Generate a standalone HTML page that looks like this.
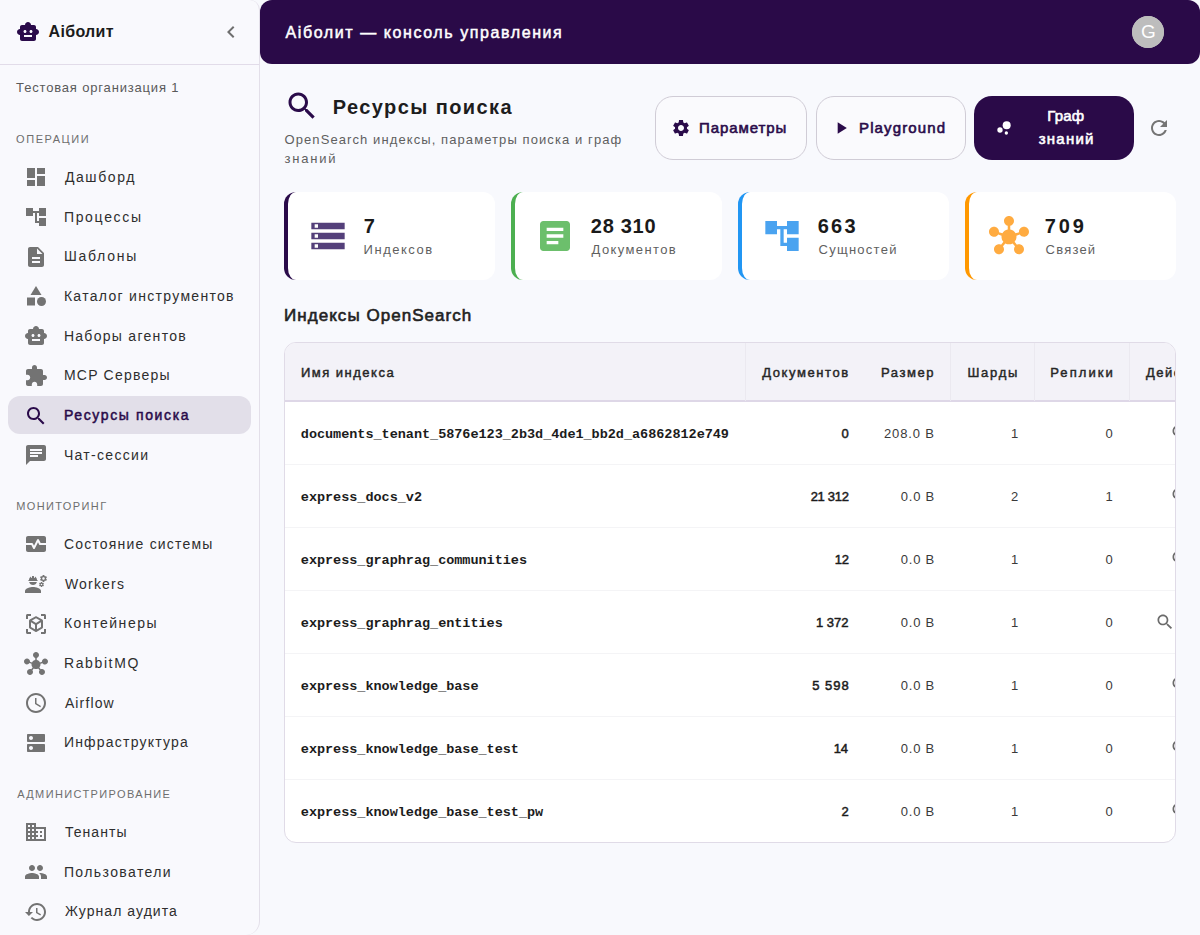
<!DOCTYPE html>
<html><head><meta charset="utf-8">
<style>
*{box-sizing:border-box;margin:0;padding:0}
html,body{width:1200px;height:935px;overflow:hidden;background:#f8f9fd;font-family:'Liberation Sans',sans-serif}
.abs{position:absolute;display:block}
.t{white-space:nowrap;line-height:1}
</style></head><body>

<div class="abs" style="left:0;top:0;width:260px;height:935px;background:#f9f9fd;border-right:1px solid #e3dfe9;border-top-right-radius:10px;border-bottom-right-radius:14px"></div>
<div class="abs" style="left:0;top:64px;width:259px;height:1px;background:#e2dce9"></div>
<svg class="abs" style="left:16px;top:20px;width:24px;height:24px;fill:#2a0b4a;" viewBox="0 0 24 24"><path d="M20 9V7c0-1.1-.9-2-2-2h-3c0-1.66-1.34-3-3-3S9 3.34 9 5H6c-1.1 0-2 .9-2 2v2c-1.66 0-3 1.34-3 3s1.34 3 3 3v4c0 1.1.9 2 2 2h12c1.1 0 2-.9 2-2v-4c1.66 0 3-1.34 3-3s-1.34-3-3-3zM7.5 11.5c0-.83.67-1.5 1.5-1.5s1.5.67 1.5 1.5S9.83 13 9 13s-1.5-.67-1.5-1.5zM16 17H8v-2h8v2zm-1-4c-.83 0-1.5-.67-1.5-1.5S14.17 10 15 10s1.5.67 1.5 1.5S15.83 13 15 13z"/></svg>
<div class="abs t" style="left:48.50px;top:24.00px;font-size:16px;color:#1b1b1b;font-weight:bold;letter-spacing:0.333px;font-family:'Liberation Sans',sans-serif;">Aiболит</div>
<svg class="abs" style="left:219.2px;top:20px;width:24px;height:24px;fill:#6f6f6f;" viewBox="0 0 24 24"><path d="M15.41 7.41L14 6l-6 6 6 6 1.41-1.41L10.83 12z"/></svg>
<div class="abs t" style="left:16.10px;top:81.20px;font-size:13px;color:#5a5a5a;font-weight:normal;letter-spacing:0.829px;font-family:'Liberation Sans',sans-serif;">Тестовая организация 1</div>
<div class="abs t" style="left:16.10px;top:134.00px;font-size:11px;color:#6e6e6e;font-weight:normal;letter-spacing:1.543px;font-family:'Liberation Sans',sans-serif;">ОПЕРАЦИИ</div>
<svg class="abs" style="left:24px;top:165.3px;width:24px;height:24px;fill:#737373;" viewBox="0 0 24 24"><path d="M3 13h8V3H3v10zm0 8h8v-6H3v6zm10 0h8V11h-8v10zm0-18v6h8V3h-8z"/></svg>
<div class="abs t" style="left:64.90px;top:169.80px;font-size:14px;color:#2e2e2e;font-weight:normal;letter-spacing:1.600px;font-family:'Liberation Sans',sans-serif;">Дашборд</div>
<svg class="abs" style="left:24px;top:205.0px;width:24px;height:24px;fill:#737373;" viewBox="0 0 24 24"><path d="M22 11V3h-7v3H9V3H2v8h7V8h2v10h4v3h7v-8h-7v3h-2V8h2v3z"/></svg>
<div class="abs t" style="left:63.90px;top:209.50px;font-size:14px;color:#2e2e2e;font-weight:normal;letter-spacing:1.686px;font-family:'Liberation Sans',sans-serif;">Процессы</div>
<svg class="abs" style="left:24px;top:244.70000000000005px;width:24px;height:24px;fill:#737373;" viewBox="0 0 24 24"><path d="M14 2H6c-1.1 0-1.99.9-1.99 2L4 20c0 1.1.89 2 1.99 2H18c1.1 0 2-.9 2-2V8l-6-6zm2 16H8v-2h8v2zm0-4H8v-2h8v2zm-3-5V3.5L18.5 9H13z"/></svg>
<div class="abs t" style="left:63.90px;top:249.20px;font-size:14px;color:#2e2e2e;font-weight:normal;letter-spacing:1.733px;font-family:'Liberation Sans',sans-serif;">Шаблоны</div>
<svg class="abs" style="left:24px;top:284.40000000000003px;width:24px;height:24px;fill:#737373;" viewBox="0 0 24 24"><path d="M12 2l-5.5 9h11z"/><circle cx="17.5" cy="17.5" r="4.5"/><path d="M3 13.5h8v8H3z"/></svg>
<div class="abs t" style="left:63.90px;top:288.90px;font-size:14px;color:#2e2e2e;font-weight:normal;letter-spacing:1.305px;font-family:'Liberation Sans',sans-serif;">Каталог инструментов</div>
<svg class="abs" style="left:24px;top:324.1px;width:24px;height:24px;fill:#737373;" viewBox="0 0 24 24"><path d="M20 9V7c0-1.1-.9-2-2-2h-3c0-1.66-1.34-3-3-3S9 3.34 9 5H6c-1.1 0-2 .9-2 2v2c-1.66 0-3 1.34-3 3s1.34 3 3 3v4c0 1.1.9 2 2 2h12c1.1 0 2-.9 2-2v-4c1.66 0 3-1.34 3-3s-1.34-3-3-3zM7.5 11.5c0-.83.67-1.5 1.5-1.5s1.5.67 1.5 1.5S9.83 13 9 13s-1.5-.67-1.5-1.5zM16 17H8v-2h8v2zm-1-4c-.83 0-1.5-.67-1.5-1.5S14.17 10 15 10s1.5.67 1.5 1.5S15.83 13 15 13z"/></svg>
<div class="abs t" style="left:63.90px;top:328.60px;font-size:14px;color:#2e2e2e;font-weight:normal;letter-spacing:1.292px;font-family:'Liberation Sans',sans-serif;">Наборы агентов</div>
<svg class="abs" style="left:24px;top:363.8px;width:24px;height:24px;fill:#737373;" viewBox="0 0 24 24"><path d="M20.5 11H19V7c0-1.1-.9-2-2-2h-4V3.5C13 2.12 11.88 1 10.5 1S8 2.12 8 3.5V5H4c-1.1 0-1.99.9-1.99 2v3.8H3.5c1.49 0 2.7 1.21 2.7 2.7s-1.21 2.7-2.7 2.7H2V20c0 1.1.9 2 2 2h3.8v-1.5c0-1.49 1.21-2.7 2.7-2.7 1.49 0 2.7 1.21 2.7 2.7V22H17c1.1 0 2-.9 2-2v-4h1.5c1.38 0 2.5-1.12 2.5-2.5S21.88 11 20.5 11z"/></svg>
<div class="abs t" style="left:63.90px;top:368.30px;font-size:14px;color:#2e2e2e;font-weight:normal;letter-spacing:1.240px;font-family:'Liberation Sans',sans-serif;">MCP Серверы</div>
<div class="abs" style="left:8px;top:395.5px;width:243px;height:38.5px;border-radius:12px;background:#e2dfe9"></div>
<svg class="abs" style="left:24px;top:403.5px;width:24px;height:24px;fill:#2a0b4a;" viewBox="0 0 24 24"><path d="M15.5 14h-.79l-.28-.27C15.41 12.59 16 11.11 16 9.5 16 5.91 13.09 3 9.5 3S3 5.91 3 9.5 5.91 16 9.5 16c1.61 0 3.09-.59 4.23-1.57l.27.28v.79l5 4.99L20.49 19l-4.99-5zm-6 0C7.01 14 5 11.99 5 9.5S7.01 5 9.5 5 14 7.01 14 9.5 11.99 14 9.5 14z"/></svg>
<div class="abs t" style="left:64.00px;top:407.55px;font-size:14px;color:#2a0b4a;font-weight:normal;letter-spacing:1.615px;font-family:'Liberation Sans',sans-serif;-webkit-text-stroke:0.5px #2a0b4a;">Ресурсы поиска</div>
<svg class="abs" style="left:24px;top:443.20000000000005px;width:24px;height:24px;fill:#737373;" viewBox="0 0 24 24"><path d="M20 2H4c-1.1 0-1.99.9-1.99 2L2 22l4-4h14c1.1 0 2-.9 2-2V4c0-1.1-.9-2-2-2zM6 9h12v2H6V9zm8 5H6v-2h8v2zm4-6H6V6h12v2z"/></svg>
<div class="abs t" style="left:63.90px;top:447.70px;font-size:14px;color:#2e2e2e;font-weight:normal;letter-spacing:1.311px;font-family:'Liberation Sans',sans-serif;">Чат-сессии</div>
<div class="abs t" style="left:16.20px;top:501.00px;font-size:11px;color:#6e6e6e;font-weight:normal;letter-spacing:1.378px;font-family:'Liberation Sans',sans-serif;">МОНИТОРИНГ</div>
<svg class="abs" style="left:24px;top:532.4px;width:24px;height:24px;fill:#737373;" viewBox="0 0 24 24"><path d="M15.11 12.45L14 10.24l-3.11 6.21c-.16.34-.51.55-.89.55s-.73-.21-.89-.55L7.38 13H2v5c0 1.1.9 2 2 2h16c1.1 0 2-.9 2-2v-5h-6c-.38 0-.72-.21-.89-.55z"/><path d="M20 4H4c-1.1 0-2 .9-2 2v5h6c.38 0 .73.21.89.55L10 13.76l3.11-6.21c.34-.68 1.45-.68 1.79 0L16.62 11H22V6c0-1.1-.9-2-2-2z"/></svg>
<div class="abs t" style="left:63.90px;top:536.90px;font-size:14px;color:#2e2e2e;font-weight:normal;letter-spacing:1.200px;font-family:'Liberation Sans',sans-serif;">Состояние системы</div>
<svg class="abs" style="left:24px;top:572.1px;width:24px;height:24px;fill:#737373;" viewBox="0 0 24 24"><path d="M9 15c-2.67 0-8 1.34-8 4v2h16v-2c0-2.66-5.33-4-8-4z"/><path d="M22.1 6.84c.01-.11.02-.22.02-.34 0-.12-.01-.23-.03-.34l.74-.58c.07-.05.08-.15.04-.22l-.7-1.21c-.04-.08-.14-.1-.21-.08l-.86.35c-.18-.14-.38-.25-.59-.34l-.13-.93c-.02-.09-.09-.15-.18-.15h-1.4c-.09 0-.16.06-.17.15l-.13.93c-.21.09-.41.21-.59.34l-.87-.35c-.08-.03-.17 0-.21.08l-.7 1.21c-.04.08-.03.17.04.22l.74.58c-.02.11-.03.23-.03.34 0 .11.01.23.03.34l-.74.58c-.07.05-.08.15-.04.22l.7 1.21c.04.08.14.1.21.08l.87-.35c.18.14.38.25.59.34l.13.93c.01.09.08.15.17.15h1.4c.09 0 .16-.06.17-.15l.13-.93c.21-.09.41-.21.59-.34l.87.35c.08.03.17 0 .21-.08l.7-1.21c.04-.08.03-.17-.04-.22l-.73-.58zm-2.6.91c-.69 0-1.25-.56-1.25-1.25s.56-1.25 1.25-1.25 1.25.56 1.25 1.25-.56 1.25-1.25 1.25zm.42 3.93l-.5-.87c-.03-.06-.1-.08-.15-.06l-.62.25c-.13-.1-.27-.18-.42-.24l-.09-.66c-.02-.06-.08-.1-.14-.1h-1c-.06 0-.11.04-.12.11l-.09.66c-.15.06-.29.15-.42.24l-.62-.25c-.06-.02-.12 0-.15.06l-.5.87c-.03.06-.02.12.03.16l.53.41c-.01.08-.02.16-.02.24 0 .08.01.17.02.24l-.53.41c-.05.04-.06.11-.03.16l.5.87c.03.06.1.08.15.06l.62-.25c.13.1.27.18.42.24l.09.66c.01.07.06.11.12.11h1c.06 0 .12-.04.12-.11l.09-.66c.15-.06.29-.15.42-.24l.62.25c.06.02.12 0 .15-.06l.5-.87c.03-.06.02-.12-.03-.16l-.52-.41c.01-.08.02-.16.02-.24 0-.08-.01-.17-.02-.24l.53-.41c.05-.04.06-.11.04-.17zm-2.42 1.65c-.46 0-.83-.38-.83-.83 0-.46.38-.83.83-.83s.83.38.83.83c0 .46-.37.83-.83.83z"/><path d="M4.74 9h8.53c.27 0 .49-.22.49-.49v-.02c0-.27-.22-.49-.49-.49H13c0-1.48-.81-2.75-2-3.45v.95c0 .28-.22.5-.5.5s-.5-.22-.5-.5V4.14C9.68 4.06 9.35 4 9 4s-.68.06-1 .14V5.5c0 .28-.22.5-.5.5S7 5.78 7 5.5v-.95C5.81 5.25 5 6.52 5 8h-.26c-.27 0-.49.22-.49.49v.03c0 .26.22.48.49.48z"/><path d="M9 13c1.86 0 3.41-1.28 3.86-3H5.14c.45 1.72 2 3 3.86 3z"/></svg>
<div class="abs t" style="left:64.90px;top:576.60px;font-size:14px;color:#2e2e2e;font-weight:normal;letter-spacing:1.200px;font-family:'Liberation Sans',sans-serif;">Workers</div>
<svg class="abs" style="left:24px;top:611.8px;width:24px;height:24px;fill:#737373;" viewBox="0 0 24 24"><path d="M18.25 7.6l-5.5-3.18c-.46-.27-1.04-.27-1.5 0L5.75 7.6c-.46.27-.75.76-.75 1.3v6.35c0 .54.29 1.03.75 1.3l5.5 3.18c.46.27 1.04.27 1.5 0l5.5-3.18c.46-.27.75-.76.75-1.3V8.9c0-.54-.29-1.03-.75-1.3zM7 14.96v-4.62l4 2.32v4.61l-4-2.31zm5-4.03L8 8.61l4-2.31 4 2.31-4 2.32zm1 6.34v-4.61l4-2.32v4.62l-4 2.31zM7 2H3.5C2.67 2 2 2.67 2 3.5V7h2V4h3V2zm10 0h3.5c.83 0 1.5.67 1.5 1.5V7h-2V4h-3V2zM7 22H3.5c-.83 0-1.5-.67-1.5-1.5V17h2v3h3v2zm10 0h3.5c.83 0 1.5-.67 1.5-1.5V17h-2v3h-3v2z"/></svg>
<div class="abs t" style="left:63.90px;top:616.30px;font-size:14px;color:#2e2e2e;font-weight:normal;letter-spacing:1.533px;font-family:'Liberation Sans',sans-serif;">Контейнеры</div>
<svg class="abs" style="left:24px;top:651.5px;width:24px;height:24px;fill:#737373;" viewBox="0 0 24 24"><path d="M8.4 18.2c.38.5.6 1.12.6 1.8 0 1.66-1.34 3-3 3s-3-1.34-3-3 1.34-3 3-3c.44 0 .85.09 1.23.26l1.41-1.77c-.92-1.03-1.29-2.39-1.09-3.69l-2.03-.68c-.54.83-1.46 1.38-2.52 1.38-1.66 0-3-1.34-3-3s1.34-3 3-3 3 1.34 3 3c0 .07 0 .14-.01.21l2.03.68c.64-1.21 1.82-2.09 3.22-2.32V5.91C9.96 5.57 9 4.4 9 3c0-1.66 1.34-3 3-3s3 1.34 3 3c0 1.4-.96 2.57-2.25 2.91v2.16c1.4.23 2.58 1.11 3.22 2.32l2.03-.68c-.01-.07-.01-.14-.01-.21 0-1.66 1.34-3 3-3s3 1.34 3 3-1.34 3-3 3c-1.06 0-1.98-.55-2.52-1.37l-2.03.68c.2 1.29-.16 2.65-1.09 3.69l1.41 1.77c.38-.17.79-.26 1.23-.26 1.66 0 3 1.34 3 3s-1.34 3-3 3-3-1.34-3-3c0-.68.22-1.3.6-1.8l-1.41-1.77c-1.35.75-3.01.76-4.37 0L8.4 18.2z"/></svg>
<div class="abs t" style="left:63.90px;top:656.00px;font-size:14px;color:#2e2e2e;font-weight:normal;letter-spacing:1.629px;font-family:'Liberation Sans',sans-serif;">RabbitMQ</div>
<svg class="abs" style="left:24px;top:691.2px;width:24px;height:24px;fill:#737373;" viewBox="0 0 24 24"><path d="M11.99 2C6.47 2 2 6.48 2 12s4.47 10 9.99 10C17.52 22 22 17.52 22 12S17.52 2 11.99 2zM12 20c-4.42 0-8-3.58-8-8s3.58-8 8-8 8 3.58 8 8-3.58 8-8 8zm.5-13H11v6l5.25 3.15.75-1.23-4.5-2.67z"/></svg>
<div class="abs t" style="left:64.90px;top:695.70px;font-size:14px;color:#2e2e2e;font-weight:normal;letter-spacing:1.133px;font-family:'Liberation Sans',sans-serif;">Airflow</div>
<svg class="abs" style="left:24px;top:730.9px;width:24px;height:24px;fill:#737373;" viewBox="0 0 24 24"><path d="M20 13H4c-.55 0-1 .45-1 1v6c0 .55.45 1 1 1h16c.55 0 1-.45 1-1v-6c0-.55-.45-1-1-1zM7 19c-1.1 0-2-.9-2-2s.9-2 2-2 2 .9 2 2-.9 2-2 2zM20 3H4c-.55 0-1 .45-1 1v6c0 .55.45 1 1 1h16c.55 0 1-.45 1-1V4c0-.55-.45-1-1-1zM7 9c-1.1 0-2-.9-2-2s.9-2 2-2 2 .9 2 2-.9 2-2 2z"/></svg>
<div class="abs t" style="left:63.90px;top:735.40px;font-size:14px;color:#2e2e2e;font-weight:normal;letter-spacing:1.215px;font-family:'Liberation Sans',sans-serif;">Инфраструктура</div>
<div class="abs t" style="left:17.20px;top:789.40px;font-size:11px;color:#6e6e6e;font-weight:normal;letter-spacing:1.375px;font-family:'Liberation Sans',sans-serif;">АДМИНИСТРИРОВАНИЕ</div>
<svg class="abs" style="left:24px;top:820.4px;width:24px;height:24px;fill:#737373;" viewBox="0 0 24 24"><path d="M12 7V3H2v18h20V7H12zM6 19H4v-2h2v2zm0-4H4v-2h2v2zm0-4H4V9h2v2zm0-4H4V5h2v2zm4 12H8v-2h2v2zm0-4H8v-2h2v2zm0-4H8V9h2v2zm0-4H8V5h2v2zm10 12h-8v-2h2v-2h-2v-2h2v-2h-2V9h8v10zm-2-8h-2v2h2v-2zm0 4h-2v2h2v-2z"/></svg>
<div class="abs t" style="left:64.90px;top:824.90px;font-size:14px;color:#2e2e2e;font-weight:normal;letter-spacing:1.067px;font-family:'Liberation Sans',sans-serif;">Тенанты</div>
<svg class="abs" style="left:24px;top:860.1px;width:24px;height:24px;fill:#737373;" viewBox="0 0 24 24"><path d="M16 11c1.66 0 2.99-1.34 2.99-3S17.66 5 16 5c-1.66 0-3 1.34-3 3s1.34 3 3 3zm-8 0c1.66 0 2.99-1.34 2.99-3S9.66 5 8 5C6.34 5 5 6.34 5 8s1.34 3 3 3zm0 2c-2.33 0-7 1.17-7 3.5V19h14v-2.5c0-2.33-4.67-3.5-7-3.5zm8 0c-.29 0-.62.02-.97.05 1.16.84 1.97 1.97 1.97 3.45V19h6v-2.5c0-2.33-4.67-3.5-7-3.5z"/></svg>
<div class="abs t" style="left:63.90px;top:864.60px;font-size:14px;color:#2e2e2e;font-weight:normal;letter-spacing:1.400px;font-family:'Liberation Sans',sans-serif;">Пользователи</div>
<svg class="abs" style="left:24px;top:899.8px;width:24px;height:24px;fill:#737373;" viewBox="0 0 24 24"><path d="M13 3c-4.97 0-9 4.03-9 9H1l3.89 3.89.07.14L9 12H6c0-3.87 3.13-7 7-7s7 3.13 7 7-3.13 7-7 7c-1.93 0-3.68-.79-4.94-2.06l-1.42 1.42C8.27 19.99 10.51 21 13 21c4.97 0 9-4.03 9-9s-4.03-9-9-9zm-1 5v5l4.28 2.54.72-1.21-3.5-2.08V8H12z"/></svg>
<div class="abs t" style="left:64.90px;top:904.30px;font-size:14px;color:#2e2e2e;font-weight:normal;letter-spacing:1.067px;font-family:'Liberation Sans',sans-serif;">Журнал аудита</div>
<div class="abs" style="left:260px;top:0;width:940px;height:64px;background:#2a0a48;border-radius:12px"></div>
<div class="abs t" style="left:285.50px;top:24.55px;font-size:16px;color:#ffffff;font-weight:normal;letter-spacing:1.585px;font-family:'Liberation Sans',sans-serif;-webkit-text-stroke:0.5px #ffffff;">Aiболит — консоль управления</div>
<div class="abs" style="left:1132px;top:16px;width:32px;height:32px;border-radius:50%;background:#bdbdbd"></div>
<div class="abs" style="left:1132px;top:16px;width:32px;height:32px;border-radius:50%;background:#bdbdbd;color:#fff;font-size:19px;line-height:32px;text-align:center;padding-left:1px">G</div>
<svg class="abs" style="left:283.8px;top:87.8px;width:36px;height:36px;fill:#2a0b4a;" viewBox="0 0 24 24"><path d="M15.5 14h-.79l-.28-.27C15.41 12.59 16 11.11 16 9.5 16 5.91 13.09 3 9.5 3S3 5.91 3 9.5 5.91 16 9.5 16c1.61 0 3.09-.59 4.23-1.57l.27.28v.79l5 4.99L20.49 19l-4.99-5zm-6 0C7.01 14 5 11.99 5 9.5S7.01 5 9.5 5 14 7.01 14 9.5 11.99 14 9.5 14z"/></svg>
<div class="abs t" style="left:332.80px;top:96.50px;font-size:20px;color:#1d1d1d;font-weight:bold;letter-spacing:1.400px;font-family:'Liberation Sans',sans-serif;">Ресурсы поиска</div>
<div class="abs t" style="left:284.50px;top:132.50px;font-size:13px;color:#5f5f5f;font-weight:normal;letter-spacing:1.090px;font-family:'Liberation Sans',sans-serif;">OpenSearch индексы, параметры поиска и граф</div>
<div class="abs t" style="left:284.50px;top:151.50px;font-size:13px;color:#5f5f5f;font-weight:normal;letter-spacing:1.800px;font-family:'Liberation Sans',sans-serif;">знаний</div>
<div class="abs" style="left:655px;top:96px;width:152px;height:64px;border-radius:18px;border:1px solid #d0ccd6;background:#fafafd"></div>
<div class="abs" style="left:816px;top:96px;width:149.5px;height:64px;border-radius:18px;border:1px solid #d0ccd6;background:#fafafd"></div>
<div class="abs" style="left:974px;top:96px;width:160px;height:64px;border-radius:18px;background:#2a0a48"></div>
<svg class="abs" style="left:670.5px;top:118.4px;width:20px;height:20px;fill:#2a0b4a;" viewBox="0 0 24 24"><path d="M19.14 12.94c.04-.3.06-.61.06-.94 0-.32-.02-.64-.07-.94l2.03-1.58c.18-.14.23-.41.12-.61l-1.92-3.32c-.12-.22-.37-.29-.59-.22l-2.39.96c-.5-.38-1.03-.7-1.62-.94l-.36-2.54c-.04-.24-.24-.41-.48-.41h-3.84c-.24 0-.43.17-.47.41l-.36 2.54c-.59.24-1.13.57-1.62.94l-2.39-.96c-.22-.08-.47 0-.59.22L2.74 8.87c-.12.21-.08.47.12.61l2.03 1.58c-.05.3-.09.63-.09.94s.02.64.07.94l-2.03 1.58c-.18.14-.23.41-.12.61l1.92 3.32c.12.22.37.29.59.22l2.39-.96c.5.38 1.03.7 1.62.94l.36 2.54c.05.24.24.41.48.41h3.84c.24 0 .44-.17.47-.41l.36-2.54c.59-.24 1.13-.56 1.62-.94l2.39.96c.22.08.47 0 .59-.22l1.92-3.32c.12-.22.07-.47-.12-.61l-2.01-1.58zM12 15.6c-1.98 0-3.6-1.62-3.6-3.6s1.62-3.6 3.6-3.6 3.6 1.62 3.6 3.6-1.62 3.6-3.6 3.6z"/></svg>
<div class="abs t" style="left:699.10px;top:119.75px;font-size:15px;color:#2a0b4a;font-weight:normal;letter-spacing:0.900px;font-family:'Liberation Sans',sans-serif;-webkit-text-stroke:0.6px #2a0b4a;">Параметры</div>
<svg class="abs" style="left:831.3px;top:118.3px;width:20px;height:20px;fill:#2a0b4a;" viewBox="0 0 24 24"><path d="M8 5v14l11-7z"/></svg>
<div class="abs t" style="left:859.00px;top:119.75px;font-size:15px;color:#2a0b4a;font-weight:normal;letter-spacing:1.133px;font-family:'Liberation Sans',sans-serif;-webkit-text-stroke:0.6px #2a0b4a;">Playground</div>
<svg class="abs" style="left:993.8px;top:117.9px;width:20px;height:20px;fill:#ffffff;" viewBox="0 0 24 24"><circle cx="7.2" cy="14.4" r="3.2"/><circle cx="14.8" cy="18" r="2"/><circle cx="15.2" cy="8.8" r="4.8"/></svg>
<div class="abs t" style="left:1047.30px;top:107.75px;font-size:15px;color:#ffffff;font-weight:normal;letter-spacing:0.133px;font-family:'Liberation Sans',sans-serif;-webkit-text-stroke:0.6px #ffffff;">Граф</div>
<div class="abs t" style="left:1038.80px;top:131.25px;font-size:15px;color:#ffffff;font-weight:normal;letter-spacing:1.200px;font-family:'Liberation Sans',sans-serif;-webkit-text-stroke:0.6px #ffffff;">знаний</div>
<svg class="abs" style="left:1147.2px;top:116.3px;width:24px;height:24px;fill:#757575;" viewBox="0 0 24 24"><path d="M17.65 6.35C16.2 4.9 14.21 4 12 4c-4.42 0-7.99 3.58-7.99 8s3.57 8 7.99 8c3.73 0 6.84-2.55 7.73-6h-2.08c-.82 2.33-3.04 4-5.65 4-3.31 0-6-2.69-6-6s2.69-6 6-6c1.66 0 3.14.69 4.22 1.78L13 11h7V4l-2.35 2.35z"/></svg>
<div class="abs" style="left:284px;top:192px;width:211px;height:87.5px;background:#fff;border-radius:12px;border-left:4px solid #2a0b4a"></div>
<svg class="abs" style="left:308px;top:216px;width:40px;height:40px;fill:#54407a;" viewBox="0 0 24 24"><path d="M2 20h20v-4H2v4zm2-3h2v2H4v-2zM2 4v4h20V4H2zm4 3H4V5h2v2zm-4 7h20v-4H2v4zm2-3h2v2H4v-2z"/></svg>
<div class="abs t" style="left:363.80px;top:216.10px;font-size:20px;color:#1a1a1a;font-weight:bold;letter-spacing:0.000px;font-family:'Liberation Sans',sans-serif;">7</div>
<div class="abs t" style="left:363.60px;top:243.40px;font-size:13px;color:#5f5f5f;font-weight:normal;letter-spacing:1.514px;font-family:'Liberation Sans',sans-serif;">Индексов</div>
<div class="abs" style="left:511px;top:192px;width:211px;height:87.5px;background:#fff;border-radius:12px;border-left:4px solid #4caf50"></div>
<svg class="abs" style="left:535px;top:216px;width:40px;height:40px;fill:#6cbf6c;" viewBox="0 0 24 24"><path d="M19 3H5c-1.1 0-2 .9-2 2v14c0 1.1.9 2 2 2h14c1.1 0 2-.9 2-2V5c0-1.1-.9-2-2-2zm-5 14H7v-2h7v2zm3-4H7v-2h10v2zm0-4H7V7h10v2z"/></svg>
<div class="abs t" style="left:590.80px;top:216.10px;font-size:20px;color:#1a1a1a;font-weight:bold;letter-spacing:0.720px;font-family:'Liberation Sans',sans-serif;">28 310</div>
<div class="abs t" style="left:591.60px;top:243.40px;font-size:13px;color:#5f5f5f;font-weight:normal;letter-spacing:1.378px;font-family:'Liberation Sans',sans-serif;">Документов</div>
<div class="abs" style="left:738px;top:192px;width:211px;height:87.5px;background:#fff;border-radius:12px;border-left:4px solid #2196f3"></div>
<svg class="abs" style="left:762px;top:216px;width:40px;height:40px;fill:#4aa3f0;" viewBox="0 0 24 24"><path d="M22 11V3h-7v3H9V3H2v8h7V8h2v10h4v3h7v-8h-7v3h-2V8h2v3z"/></svg>
<div class="abs t" style="left:817.80px;top:216.10px;font-size:20px;color:#1a1a1a;font-weight:bold;letter-spacing:2.200px;font-family:'Liberation Sans',sans-serif;">663</div>
<div class="abs t" style="left:818.60px;top:243.40px;font-size:13px;color:#5f5f5f;font-weight:normal;letter-spacing:1.250px;font-family:'Liberation Sans',sans-serif;">Сущностей</div>
<div class="abs" style="left:965px;top:192px;width:211px;height:87.5px;background:#fff;border-radius:12px;border-left:4px solid #ff9800"></div>
<svg class="abs" style="left:989px;top:216px;width:40px;height:40px;fill:#ffab40;" viewBox="0 0 24 24"><path d="M8.4 18.2c.38.5.6 1.12.6 1.8 0 1.66-1.34 3-3 3s-3-1.34-3-3 1.34-3 3-3c.44 0 .85.09 1.23.26l1.41-1.77c-.92-1.03-1.29-2.39-1.09-3.69l-2.03-.68c-.54.83-1.46 1.38-2.52 1.38-1.66 0-3-1.34-3-3s1.34-3 3-3 3 1.34 3 3c0 .07 0 .14-.01.21l2.03.68c.64-1.21 1.82-2.09 3.22-2.32V5.91C9.96 5.57 9 4.4 9 3c0-1.66 1.34-3 3-3s3 1.34 3 3c0 1.4-.96 2.57-2.25 2.91v2.16c1.4.23 2.58 1.11 3.22 2.32l2.03-.68c-.01-.07-.01-.14-.01-.21 0-1.66 1.34-3 3-3s3 1.34 3 3-1.34 3-3 3c-1.06 0-1.98-.55-2.52-1.37l-2.03.68c.2 1.29-.16 2.65-1.09 3.69l1.41 1.77c.38-.17.79-.26 1.23-.26 1.66 0 3 1.34 3 3s-1.34 3-3 3-3-1.34-3-3c0-.68.22-1.3.6-1.8l-1.41-1.77c-1.35.75-3.01.76-4.37 0L8.4 18.2z"/></svg>
<div class="abs t" style="left:1044.80px;top:216.10px;font-size:20px;color:#1a1a1a;font-weight:bold;letter-spacing:2.900px;font-family:'Liberation Sans',sans-serif;">709</div>
<div class="abs t" style="left:1045.60px;top:243.40px;font-size:13px;color:#5f5f5f;font-weight:normal;letter-spacing:1.200px;font-family:'Liberation Sans',sans-serif;">Связей</div>
<div class="abs t" style="left:284.00px;top:306.75px;font-size:17px;color:#222222;font-weight:normal;letter-spacing:1.047px;font-family:'Liberation Sans',sans-serif;-webkit-text-stroke:0.6px #222222;">Индексы OpenSearch</div>
<div class="abs" style="left:284px;top:342px;width:892px;height:501px;background:#fff;border:1px solid #e0dbe7;border-radius:12px;overflow:hidden">
<div class="abs" style="left:0;top:0;width:892px;height:58.7px;background:#f3f2f8;border-bottom:2px solid #ded7e7"></div>
<div class="abs" style="left:460px;top:0;width:1px;height:57.5px;background:#ebe9f0"></div>
<div class="abs" style="left:665px;top:0;width:1px;height:57.5px;background:#ebe9f0"></div>
<div class="abs" style="left:749px;top:0;width:1px;height:57.5px;background:#ebe9f0"></div>
<div class="abs" style="left:844px;top:0;width:1px;height:57.5px;background:#ebe9f0"></div>
<div class="abs" style="left:0;top:121.0px;width:892px;height:1px;background:#f4f4f6"></div>
<div class="abs" style="left:0;top:184.0px;width:892px;height:1px;background:#f4f4f6"></div>
<div class="abs" style="left:0;top:247.0px;width:892px;height:1px;background:#f4f4f6"></div>
<div class="abs" style="left:0;top:310.0px;width:892px;height:1px;background:#f4f4f6"></div>
<div class="abs" style="left:0;top:373.0px;width:892px;height:1px;background:#f4f4f6"></div>
<div class="abs" style="left:0;top:436.0px;width:892px;height:1px;background:#f4f4f6"></div>
<svg class="abs" style="left:884.9000000000001px;top:79.80000000000001px;width:20px;height:20px;fill:#6b6b6b;" viewBox="0 0 24 24"><path d="M15.5 14h-.79l-.28-.27C15.41 12.59 16 11.11 16 9.5 16 5.91 13.09 3 9.5 3S3 5.91 3 9.5 5.91 16 9.5 16c1.61 0 3.09-.59 4.23-1.57l.27.28v.79l5 4.99L20.49 19l-4.99-5zm-6 0C7.01 14 5 11.99 5 9.5S7.01 5 9.5 5 14 7.01 14 9.5 11.99 14 9.5 14z"/></svg>
<svg class="abs" style="left:884.9000000000001px;top:142.8px;width:20px;height:20px;fill:#6b6b6b;" viewBox="0 0 24 24"><path d="M15.5 14h-.79l-.28-.27C15.41 12.59 16 11.11 16 9.5 16 5.91 13.09 3 9.5 3S3 5.91 3 9.5 5.91 16 9.5 16c1.61 0 3.09-.59 4.23-1.57l.27.28v.79l5 4.99L20.49 19l-4.99-5zm-6 0C7.01 14 5 11.99 5 9.5S7.01 5 9.5 5 14 7.01 14 9.5 11.99 14 9.5 14z"/></svg>
<svg class="abs" style="left:884.9000000000001px;top:205.79999999999995px;width:20px;height:20px;fill:#6b6b6b;" viewBox="0 0 24 24"><path d="M15.5 14h-.79l-.28-.27C15.41 12.59 16 11.11 16 9.5 16 5.91 13.09 3 9.5 3S3 5.91 3 9.5 5.91 16 9.5 16c1.61 0 3.09-.59 4.23-1.57l.27.28v.79l5 4.99L20.49 19l-4.99-5zm-6 0C7.01 14 5 11.99 5 9.5S7.01 5 9.5 5 14 7.01 14 9.5 11.99 14 9.5 14z"/></svg>
<svg class="abs" style="left:869.8px;top:268.79999999999995px;width:20px;height:20px;fill:#6b6b6b;" viewBox="0 0 24 24"><path d="M15.5 14h-.79l-.28-.27C15.41 12.59 16 11.11 16 9.5 16 5.91 13.09 3 9.5 3S3 5.91 3 9.5 5.91 16 9.5 16c1.61 0 3.09-.59 4.23-1.57l.27.28v.79l5 4.99L20.49 19l-4.99-5zm-6 0C7.01 14 5 11.99 5 9.5S7.01 5 9.5 5 14 7.01 14 9.5 11.99 14 9.5 14z"/></svg>
<svg class="abs" style="left:884.9000000000001px;top:331.79999999999995px;width:20px;height:20px;fill:#6b6b6b;" viewBox="0 0 24 24"><path d="M15.5 14h-.79l-.28-.27C15.41 12.59 16 11.11 16 9.5 16 5.91 13.09 3 9.5 3S3 5.91 3 9.5 5.91 16 9.5 16c1.61 0 3.09-.59 4.23-1.57l.27.28v.79l5 4.99L20.49 19l-4.99-5zm-6 0C7.01 14 5 11.99 5 9.5S7.01 5 9.5 5 14 7.01 14 9.5 11.99 14 9.5 14z"/></svg>
<svg class="abs" style="left:884.9000000000001px;top:394.79999999999995px;width:20px;height:20px;fill:#6b6b6b;" viewBox="0 0 24 24"><path d="M15.5 14h-.79l-.28-.27C15.41 12.59 16 11.11 16 9.5 16 5.91 13.09 3 9.5 3S3 5.91 3 9.5 5.91 16 9.5 16c1.61 0 3.09-.59 4.23-1.57l.27.28v.79l5 4.99L20.49 19l-4.99-5zm-6 0C7.01 14 5 11.99 5 9.5S7.01 5 9.5 5 14 7.01 14 9.5 11.99 14 9.5 14z"/></svg>
<svg class="abs" style="left:884.9000000000001px;top:457.79999999999995px;width:20px;height:20px;fill:#6b6b6b;" viewBox="0 0 24 24"><path d="M15.5 14h-.79l-.28-.27C15.41 12.59 16 11.11 16 9.5 16 5.91 13.09 3 9.5 3S3 5.91 3 9.5 5.91 16 9.5 16c1.61 0 3.09-.59 4.23-1.57l.27.28v.79l5 4.99L20.49 19l-4.99-5zm-6 0C7.01 14 5 11.99 5 9.5S7.01 5 9.5 5 14 7.01 14 9.5 11.99 14 9.5 14z"/></svg>
</div>
<div class="abs t" style="left:300.90px;top:366.05px;font-size:13px;color:#262626;font-weight:normal;letter-spacing:1.500px;font-family:'Liberation Sans',sans-serif;-webkit-text-stroke:0.45px #262626;">Имя индекса</div>
<div class="abs t" style="right:350.20px;top:366.05px;font-size:13px;color:#262626;font-weight:normal;letter-spacing:1.600px;font-family:'Liberation Sans',sans-serif;-webkit-text-stroke:0.45px #262626;">Документов</div>
<div class="abs t" style="right:264.80px;top:366.05px;font-size:13px;color:#262626;font-weight:normal;letter-spacing:1.600px;font-family:'Liberation Sans',sans-serif;-webkit-text-stroke:0.45px #262626;">Размер</div>
<div class="abs t" style="right:180.80px;top:366.05px;font-size:13px;color:#262626;font-weight:normal;letter-spacing:1.750px;font-family:'Liberation Sans',sans-serif;-webkit-text-stroke:0.45px #262626;">Шарды</div>
<div class="abs t" style="right:85.20px;top:366.05px;font-size:13px;color:#262626;font-weight:normal;letter-spacing:2.067px;font-family:'Liberation Sans',sans-serif;-webkit-text-stroke:0.45px #262626;">Реплики</div>
<div class="abs" style="left:0;top:0;width:1175px;height:935px;overflow:hidden"><div class="abs t" style="left:1146.00px;top:366.05px;font-size:13px;color:#262626;font-weight:normal;letter-spacing:1.500px;font-family:'Liberation Sans',sans-serif;-webkit-text-stroke:0.45px #262626;">Действия</div></div>
<div class="abs t" style="left:300.80px;top:428.00px;font-size:13.5px;color:#1c1c1c;font-weight:bold;letter-spacing:-0.023px;font-family:'Liberation Mono',monospace;">documents_tenant_5876e123_2b3d_4de1_bb2d_a6862812e749</div>
<div class="abs t" style="right:351.40px;top:426.55px;font-size:13px;color:#1c1c1c;font-weight:normal;letter-spacing:0.000px;font-family:'Liberation Sans',sans-serif;-webkit-text-stroke:0.5px #1c1c1c;">0</div>
<div class="abs t" style="right:265.10px;top:427.00px;font-size:13px;color:#3a3a3a;font-weight:normal;letter-spacing:0.867px;font-family:'Liberation Sans',sans-serif;">208.0 B</div>
<div class="abs t" style="right:181.80px;top:427.00px;font-size:13px;color:#3a3a3a;font-weight:normal;letter-spacing:0.000px;font-family:'Liberation Sans',sans-serif;">1</div>
<div class="abs t" style="right:87.20px;top:427.00px;font-size:13px;color:#3a3a3a;font-weight:normal;letter-spacing:0.000px;font-family:'Liberation Sans',sans-serif;">0</div>
<div class="abs t" style="left:300.80px;top:491.00px;font-size:13.5px;color:#1c1c1c;font-weight:bold;letter-spacing:-0.023px;font-family:'Liberation Mono',monospace;">express_docs_v2</div>
<div class="abs t" style="right:351.40px;top:489.55px;font-size:13px;color:#1c1c1c;font-weight:normal;letter-spacing:-0.300px;font-family:'Liberation Sans',sans-serif;-webkit-text-stroke:0.5px #1c1c1c;">21 312</div>
<div class="abs t" style="right:265.10px;top:490.00px;font-size:13px;color:#3a3a3a;font-weight:normal;letter-spacing:0.750px;font-family:'Liberation Sans',sans-serif;">0.0 B</div>
<div class="abs t" style="right:181.80px;top:490.00px;font-size:13px;color:#3a3a3a;font-weight:normal;letter-spacing:0.000px;font-family:'Liberation Sans',sans-serif;">2</div>
<div class="abs t" style="right:87.20px;top:490.00px;font-size:13px;color:#3a3a3a;font-weight:normal;letter-spacing:0.000px;font-family:'Liberation Sans',sans-serif;">1</div>
<div class="abs t" style="left:300.80px;top:554.00px;font-size:13.5px;color:#1c1c1c;font-weight:bold;letter-spacing:-0.023px;font-family:'Liberation Mono',monospace;">express_graphrag_communities</div>
<div class="abs t" style="right:351.40px;top:552.55px;font-size:13px;color:#1c1c1c;font-weight:normal;letter-spacing:-0.300px;font-family:'Liberation Sans',sans-serif;-webkit-text-stroke:0.5px #1c1c1c;">12</div>
<div class="abs t" style="right:265.10px;top:553.00px;font-size:13px;color:#3a3a3a;font-weight:normal;letter-spacing:0.750px;font-family:'Liberation Sans',sans-serif;">0.0 B</div>
<div class="abs t" style="right:181.80px;top:553.00px;font-size:13px;color:#3a3a3a;font-weight:normal;letter-spacing:0.000px;font-family:'Liberation Sans',sans-serif;">1</div>
<div class="abs t" style="right:87.20px;top:553.00px;font-size:13px;color:#3a3a3a;font-weight:normal;letter-spacing:0.000px;font-family:'Liberation Sans',sans-serif;">0</div>
<div class="abs t" style="left:300.80px;top:617.00px;font-size:13.5px;color:#1c1c1c;font-weight:bold;letter-spacing:-0.023px;font-family:'Liberation Mono',monospace;">express_graphrag_entities</div>
<div class="abs t" style="right:351.40px;top:615.55px;font-size:13px;color:#1c1c1c;font-weight:normal;letter-spacing:0.025px;font-family:'Liberation Sans',sans-serif;-webkit-text-stroke:0.5px #1c1c1c;">1 372</div>
<div class="abs t" style="right:265.10px;top:616.00px;font-size:13px;color:#3a3a3a;font-weight:normal;letter-spacing:0.750px;font-family:'Liberation Sans',sans-serif;">0.0 B</div>
<div class="abs t" style="right:181.80px;top:616.00px;font-size:13px;color:#3a3a3a;font-weight:normal;letter-spacing:0.000px;font-family:'Liberation Sans',sans-serif;">1</div>
<div class="abs t" style="right:87.20px;top:616.00px;font-size:13px;color:#3a3a3a;font-weight:normal;letter-spacing:0.000px;font-family:'Liberation Sans',sans-serif;">0</div>
<div class="abs t" style="left:300.80px;top:680.00px;font-size:13.5px;color:#1c1c1c;font-weight:bold;letter-spacing:-0.023px;font-family:'Liberation Mono',monospace;">express_knowledge_base</div>
<div class="abs t" style="right:350.40px;top:678.55px;font-size:13px;color:#1c1c1c;font-weight:normal;letter-spacing:0.950px;font-family:'Liberation Sans',sans-serif;-webkit-text-stroke:0.5px #1c1c1c;">5 598</div>
<div class="abs t" style="right:265.10px;top:679.00px;font-size:13px;color:#3a3a3a;font-weight:normal;letter-spacing:0.750px;font-family:'Liberation Sans',sans-serif;">0.0 B</div>
<div class="abs t" style="right:181.80px;top:679.00px;font-size:13px;color:#3a3a3a;font-weight:normal;letter-spacing:0.000px;font-family:'Liberation Sans',sans-serif;">1</div>
<div class="abs t" style="right:87.20px;top:679.00px;font-size:13px;color:#3a3a3a;font-weight:normal;letter-spacing:0.000px;font-family:'Liberation Sans',sans-serif;">0</div>
<div class="abs t" style="left:300.80px;top:743.00px;font-size:13.5px;color:#1c1c1c;font-weight:bold;letter-spacing:-0.023px;font-family:'Liberation Mono',monospace;">express_knowledge_base_test</div>
<div class="abs t" style="right:352.40px;top:741.55px;font-size:13px;color:#1c1c1c;font-weight:normal;letter-spacing:-0.300px;font-family:'Liberation Sans',sans-serif;-webkit-text-stroke:0.5px #1c1c1c;">14</div>
<div class="abs t" style="right:265.10px;top:742.00px;font-size:13px;color:#3a3a3a;font-weight:normal;letter-spacing:0.750px;font-family:'Liberation Sans',sans-serif;">0.0 B</div>
<div class="abs t" style="right:181.80px;top:742.00px;font-size:13px;color:#3a3a3a;font-weight:normal;letter-spacing:0.000px;font-family:'Liberation Sans',sans-serif;">1</div>
<div class="abs t" style="right:87.20px;top:742.00px;font-size:13px;color:#3a3a3a;font-weight:normal;letter-spacing:0.000px;font-family:'Liberation Sans',sans-serif;">0</div>
<div class="abs t" style="left:300.80px;top:806.00px;font-size:13.5px;color:#1c1c1c;font-weight:bold;letter-spacing:-0.023px;font-family:'Liberation Mono',monospace;">express_knowledge_base_test_pw</div>
<div class="abs t" style="right:351.40px;top:804.55px;font-size:13px;color:#1c1c1c;font-weight:normal;letter-spacing:0.000px;font-family:'Liberation Sans',sans-serif;-webkit-text-stroke:0.5px #1c1c1c;">2</div>
<div class="abs t" style="right:265.10px;top:805.00px;font-size:13px;color:#3a3a3a;font-weight:normal;letter-spacing:0.750px;font-family:'Liberation Sans',sans-serif;">0.0 B</div>
<div class="abs t" style="right:181.80px;top:805.00px;font-size:13px;color:#3a3a3a;font-weight:normal;letter-spacing:0.000px;font-family:'Liberation Sans',sans-serif;">1</div>
<div class="abs t" style="right:87.20px;top:805.00px;font-size:13px;color:#3a3a3a;font-weight:normal;letter-spacing:0.000px;font-family:'Liberation Sans',sans-serif;">0</div>
</body></html>
